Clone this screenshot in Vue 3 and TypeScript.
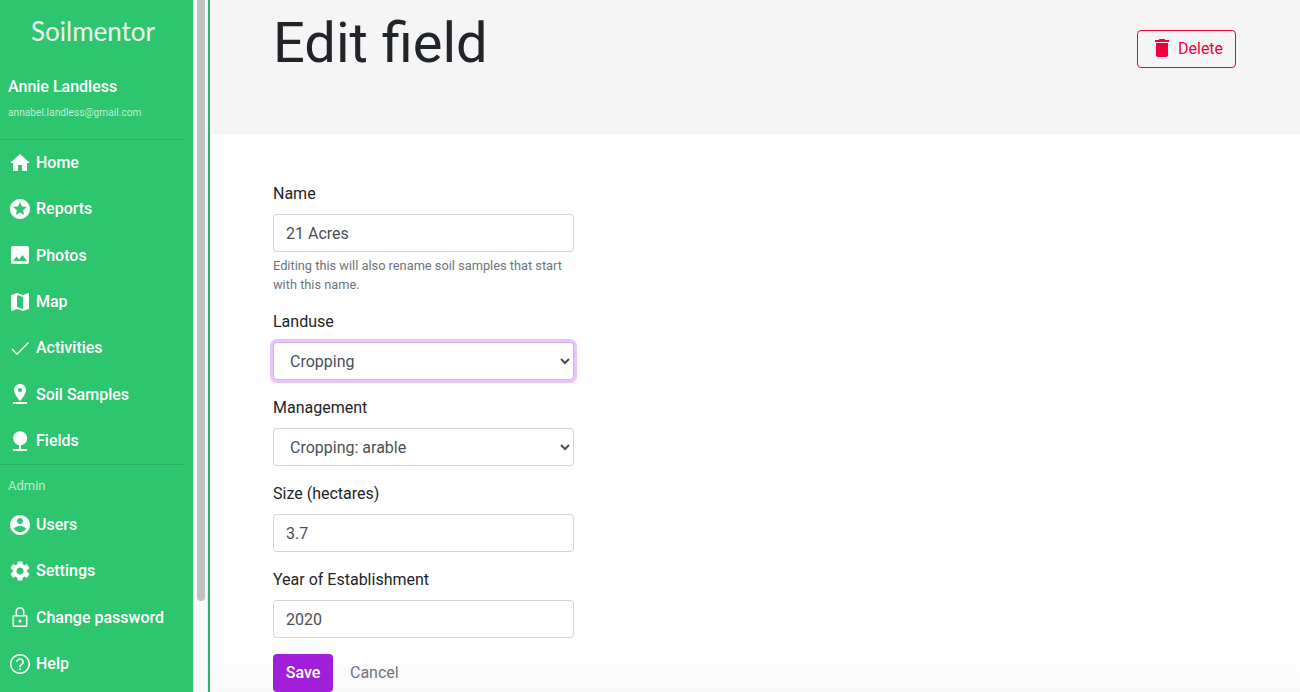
<script setup lang="ts">
interface NavItem {
  label: string;
  icon: string;
}

const mainNav: NavItem[] = [
  { label: "Home", icon: "M10 20v-6h4v6h5v-8h3L12 3 2 12h3v8z" },
  { label: "Reports", icon: "M11.99 2C6.47 2 2 6.48 2 12s4.47 10 9.99 10C17.52 22 22 17.52 22 12S17.52 2 11.99 2zm4.24 16L12 15.45 7.77 18l1.12-4.81-3.73-3.23 4.92-.42L12 5l1.92 4.53 4.92.42-3.73 3.23L16.23 18z" },
  { label: "Photos", icon: "M21 19V5c0-1.1-.9-2-2-2H5c-1.1 0-2 .9-2 2v14c0 1.1.9 2 2 2h14c1.1 0 2-.9 2-2zM8.5 13.5l2.5 3.01L14.5 12l4.5 6H5l3.5-4.5z" },
  { label: "Map", icon: "M20.5 3l-.16.03L15 5.1 9 3 3.36 4.9c-.21.07-.36.25-.36.48V20.5c0 .28.22.5.5.5l.16-.03L9 18.9l6 2.1 5.64-1.9c.21-.07.36-.25.36-.48V3.5c0-.28-.22-.5-.5-.5zM15 19l-6-2.11V5l6 2.11V19z" },
  { label: "Activities", icon: "M9 17.2L20 6.1l1 .9L9 19l-5.5-5.5 1-1z" },
  { label: "Soil Samples", icon: "M18 8c0-3.31-2.69-6-6-6S6 4.69 6 8c0 4.5 6 11 6 11s6-6.5 6-11zm-8 0c0-1.1.9-2 2-2s2 .9 2 2-.89 2-2 2c-1.1 0-2-.9-2-2zM5 20v2h14v-2H5z" },
  { label: "Fields", icon: "M13 16.12c3.47-.41 6.17-3.36 6.17-6.95 0-3.87-3.13-7-7-7s-7 3.13-7 7c0 3.47 2.52 6.34 5.83 6.89V20H5v2h14v-2h-6v-3.88z" },
];

const adminNav: NavItem[] = [
  { label: "Users", icon: "M12 2C6.48 2 2 6.48 2 12s4.48 10 10 10 10-4.48 10-10S17.52 2 12 2zm0 3c1.66 0 3 1.34 3 3s-1.34 3-3 3-3-1.34-3-3 1.34-3 3-3zm0 14.2c-2.5 0-4.71-1.28-6-3.22.03-1.99 4-3.08 6-3.08 1.99 0 5.97 1.09 6 3.08-1.29 1.94-3.5 3.22-6 3.22z" },
  { label: "Settings", icon: "M19.14 12.94c.04-.3.06-.61.06-.94 0-.32-.02-.64-.07-.94l2.03-1.58c.18-.14.23-.41.12-.61l-1.92-3.32c-.12-.22-.37-.29-.59-.22l-2.39.96c-.5-.38-1.03-.7-1.62-.94L14.4 2.81c-.04-.24-.24-.41-.48-.41h-3.84c-.24 0-.43.17-.47.41L9.25 5.35c-.59.24-1.13.57-1.62.94l-2.39-.96c-.22-.08-.47 0-.59.22L2.74 8.87c-.12.21-.08.47.12.61l2.03 1.58c-.05.3-.09.63-.09.94s.02.64.07.94l-2.03 1.58c-.18.14-.23.41-.12.61l1.92 3.32c.12.22.37.29.59.22l2.39-.96c.5.38 1.03.7 1.62.94l.36 2.54c.05.24.24.41.48.41h3.84c.24 0 .44-.17.47-.41l.36-2.54c.59-.24 1.13-.56 1.62-.94l2.39.96c.22.08.47 0 .59-.22l1.92-3.32c.12-.22.07-.47-.12-.61l-2.01-1.58zM12 15.6c-1.98 0-3.6-1.62-3.6-3.6s1.62-3.6 3.6-3.6 3.6 1.62 3.6 3.6-1.62 3.6-3.6 3.6z" },
  { label: "Change password", icon: "M6 10h1.5V6.5a4.5 4.5 0 0 1 9 0V10H18a1.5 1.5 0 0 1 1.5 1.5v9A1.5 1.5 0 0 1 18 22H6a1.5 1.5 0 0 1-1.5-1.5v-9A1.5 1.5 0 0 1 6 10zM9.1 10h5.8V6.5a2.9 2.9 0 0 0-5.8 0zM6.1 11.6v8.8h11.8v-8.8zM12 14.5a1.6 1.6 0 1 0 0 3.2 1.6 1.6 0 1 0 0-3.2z" },
  { label: "Help", icon: "M11.2 18h1.6v-1.6h-1.6zM12 2C6.48 2 2 6.48 2 12s4.48 10 10 10 10-4.48 10-10S17.52 2 12 2zM12 20.5c-4.7 0-8.5-3.8-8.5-8.5S7.3 3.5 12 3.5s8.5 3.8 8.5 8.5-3.8 8.5-8.5 8.5zM12 6.2c-2.2 0-4 1.7-4 3.8h1.6c0-1.3 1.1-2.3 2.4-2.3s2.4 1 2.4 2.3c0 2-3.2 1.9-3.2 5.2h1.6c0-2.4 3.2-2.7 3.2-5.2 0-2.1-1.8-3.8-4-3.8z" },
];

const deleteIcon = "M6 19c0 1.1.9 2 2 2h8c1.1 0 2-.9 2-2V7H6v12zM19 4h-3.5l-1-1h-5l-1 1H5v2h14V4z";
</script>

<template>
  <div class="page">
    <aside class="sidebar">
      <div class="logo">Soilmentor</div>
      <div class="user">
        <p class="user-name">Annie Landless</p>
        <p class="user-email">annabel.landless@gmail.com</p>
      </div>
      <nav class="nav">
        <a v-for="item in mainNav" :key="item.label" class="nav-item">
          <svg class="nav-icon" viewBox="0 0 24 24"><path :d="item.icon" /></svg>
          <span>{{ item.label }}</span>
        </a>
      </nav>
      <nav class="nav admin">
        <p class="nav-heading">Admin</p>
        <a v-for="item in adminNav" :key="item.label" class="nav-item">
          <svg class="nav-icon" viewBox="0 0 24 24"><path :d="item.icon" /></svg>
          <span>{{ item.label }}</span>
        </a>
      </nav>
    </aside>

    <div class="scrollbar"><div class="thumb"></div></div>

    <main class="main">
      <header class="head">
        <h1 class="title">Edit field</h1>
        <button class="btn-delete">
          <svg class="delete-icon" viewBox="0 0 24 24"><path :d="deleteIcon" /></svg>
          <span>Delete</span>
        </button>
      </header>

      <form class="form" @submit.prevent>
        <div class="field">
          <label>Name</label>
          <input type="text" value="21 Acres" />
          <small>Editing this will also rename soil samples that start with this name.</small>
        </div>
        <div class="field">
          <label>Landuse</label>
          <select class="focused">
            <option>Cropping</option>
          </select>
        </div>
        <div class="field">
          <label>Management</label>
          <select>
            <option>Cropping: arable</option>
          </select>
        </div>
        <div class="field">
          <label>Size (hectares)</label>
          <input type="text" value="3.7" />
        </div>
        <div class="field">
          <label>Year of Establishment</label>
          <input type="text" value="2020" />
        </div>
        <div class="actions">
          <button class="btn-save">Save</button>
          <a class="btn-cancel">Cancel</a>
        </div>
      </form>
    </main>
  </div>
</template>

<style>
html,
body {
  margin: 0;
  overflow: hidden;
  background: #fff;
}
</style>

<style scoped>
.page {
  display: flex;
  width: 1300px;
  height: 692px;
  overflow: hidden;
  font-family: Roboto, "Liberation Sans", sans-serif;
  color: #212529;
}

.sidebar {
  width: 193px;
  flex-shrink: 0;
  background: #2ec56f;
  color: #fff;
}

.logo {
  height: 62px;
  line-height: 62px;
  padding-left: 31px;
  font-family: Lato, sans-serif;
  font-weight: 400;
  font-size: 26px;
  color: #edfaf2;
}

.user {
  height: 77.5px;
  box-sizing: border-box;
  padding-left: 8px;
  margin-right: 8px;
  border-bottom: 1px solid #29b163;
}

.user-name {
  margin: 0;
  padding-top: 15px;
  font-size: 16px;
  line-height: 20px;
  font-weight: 500;
}

.user-email {
  margin: 8px 0 0;
  font-size: 10.2px;
  line-height: 16px;
  color: #bdeed2;
}

.nav {
  margin-right: 8px;
}

.admin {
  border-top: 1px solid #29b163;
}

.nav-heading {
  margin: 0;
  height: 36.7px;
  padding: 12px 0 0 8px;
  box-sizing: border-box;
  font-size: 13px;
  line-height: 18px;
  color: #bdeed2;
}

.nav-item {
  display: flex;
  align-items: center;
  height: 46.33px;
  padding-left: 8px;
  gap: 4px;
  font-size: 16px;
  font-weight: 500;
}

.nav-icon {
  width: 24px;
  height: 24px;
  fill: #fff;
  fill-rule: evenodd;
  flex-shrink: 0;
}

.scrollbar {
  width: 15px;
  flex-shrink: 0;
  box-sizing: border-box;
  padding: 0 3px 0 4px;
  background: #fafafa;
  border-right: 1px solid #ececec;
}

.thumb {
  width: 8px;
  height: 601px;
  background: #c1c1c1;
  border-radius: 0 0 4px 4px;
}

.main {
  flex: 1;
  border-left: 2px solid #2cb569;
  display: flex;
  flex-direction: column;
  background: linear-gradient(to bottom, #fff 0, #fff 655px, #f9f9f9 692px);
}

.head {
  height: 134px;
  flex-shrink: 0;
  box-sizing: border-box;
  background: #f5f5f5;
  display: flex;
  justify-content: space-between;
  align-items: flex-start;
  padding: 0 64px 0 63px;
}

.title {
  margin: 10px 0 0;
  font-size: 56px;
  line-height: 67px;
  font-weight: 400;
}

.btn-delete {
  margin-top: 30px;
  width: 99px;
  height: 38px;
  display: flex;
  align-items: center;
  box-sizing: border-box;
  padding: 0 0 2px 12px;
  gap: 4px;
  background: transparent;
  border: 1px solid #f0003c;
  border-radius: 4px;
  color: #f0003c;
  font-family: inherit;
  font-size: 16px;
}

.delete-icon {
  width: 24px;
  height: 24px;
  fill: #f0003c;
  flex-shrink: 0;
}

.form {
  padding: 48px 0 0 63px;
  width: 301px;
}

.field {
  margin-bottom: 16px;
}

label {
  display: block;
  font-size: 16px;
  line-height: 24px;
  margin-bottom: 8px;
}

input,
select {
  display: block;
  width: 301px;
  height: 38px;
  box-sizing: border-box;
  padding: 0 12px;
  font-family: inherit;
  font-size: 16px;
  color: #495057;
  background-color: #fff;
  border: 1px solid #ced4da;
  border-radius: 4px;
  outline: none;
}

.focused {
  border-color: #d9a9f0;
  box-shadow: 0 0 0 3px #e8c6f7;
}

small {
  display: block;
  margin-top: 4px;
  font-size: 12.8px;
  line-height: 19px;
  color: #6c757d;
}

.actions {
  display: flex;
  align-items: flex-start;
}

.btn-save {
  width: 60px;
  height: 38px;
  padding: 0 0 2px;
  background: #a11fd9;
  border: none;
  border-radius: 4px;
  color: #fff;
  font-family: inherit;
  font-size: 16px;
  font-weight: 500;
}

.btn-cancel {
  margin-left: 17px;
  font-size: 16px;
  line-height: 38px;
  color: #6c757d;
}
</style>
